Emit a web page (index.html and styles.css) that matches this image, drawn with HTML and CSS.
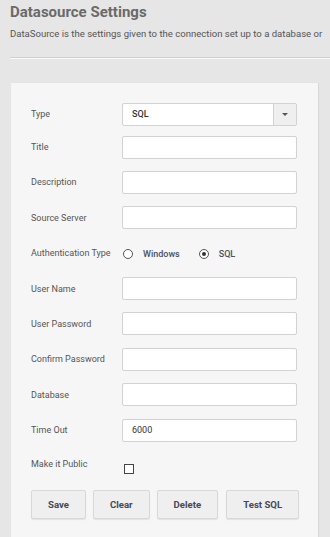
FILE: index.html
```html
<!DOCTYPE html>
<html>
<head>
<meta charset="utf-8">
<link rel="stylesheet" href="styles.css">
</head>
<body>
<div class="page">
  <h1 class="title">Datasource Settings</h1>
  <p class="subtitle">DataSource is the settings given to the connection set up to a database or other source of data used by the reports.</p>
  <hr class="divider">
  <div class="card">
    <div class="row row-first">
      <span class="label">Type</span>
      <div class="select">
        <span class="select-value">SQL</span>
        <span class="select-arrow"><span class="caret"></span></span>
      </div>
    </div>
    <div class="row"><span class="label">Title</span><div class="input"></div></div>
    <div class="row"><span class="label">Description</span><div class="input"></div></div>
    <div class="row"><span class="label">Source Server</span><div class="input"></div></div>
    <div class="row">
      <span class="label">Authentication Type</span>
      <div class="radios">
        <span class="radio"></span><span class="radio-text">Windows</span>
        <span class="radio radio-on"></span><span class="radio-text">SQL</span>
      </div>
    </div>
    <div class="row"><span class="label">User Name</span><div class="input"></div></div>
    <div class="row"><span class="label">User Password</span><div class="input"></div></div>
    <div class="row"><span class="label">Confirm Password</span><div class="input"></div></div>
    <div class="row"><span class="label">Database</span><div class="input"></div></div>
    <div class="row"><span class="label">Time Out</span><div class="input"><span class="input-value">6000</span></div></div>
    <div class="row row-public"><span class="label">Make it Public</span><span class="checkbox"></span></div>
    <div class="buttons">
      <button class="btn">Save</button>
      <button class="btn">Clear</button>
      <button class="btn">Delete</button>
      <button class="btn btn-last">Test SQL</button>
    </div>
  </div>
</div>
</body>
</html>
```

FILE: styles.css
```css
html, body {
  margin: 0;
  padding: 0;
  background: #e6e6e6;
  overflow: hidden;
  font-family: Roboto, "Liberation Sans", sans-serif;
}
.page {
  padding: 0 0 0 10px;
  width: 320px;
  height: 537px;
  overflow: hidden;
}
.title {
  margin: 0;
  padding-top: 3px;
  font-size: 15px;
  font-weight: 700;
  color: #6a6a6a;
  line-height: 18px;
}
.subtitle {
  margin: 7px 0 0;
  width: 314px;
  overflow: hidden;
  font-size: 9.55px;
  line-height: 12px;
  color: #555;
  white-space: nowrap;
}
.divider {
  margin: 17px 0 0;
  border: 0;
  border-top: 1px solid #cfcfcf;
  border-bottom: 1px solid #fafafa;
  height: 0;
  width: 330px;
}
.card {
  margin: 24px 0 0 1px;
  width: 307px;
  height: 480px;
  box-sizing: border-box;
  background: #f6f6f6;
  padding: 19.5px 0 0 20px;
  box-shadow: 1px 0 1px rgba(0,0,0,0.06);
}
.row {
  display: flex;
  align-items: center;
  height: 23px;
  margin-bottom: 12.4px;
}
.row-first { margin-bottom: 10px; }
.label {
  width: 91px;
  flex: none;
  font-size: 9px;
  color: #555;
  white-space: nowrap;
}
.input, .select {
  width: 175px;
  height: 23px;
  box-sizing: border-box;
  background: #fff;
  border: 1px solid #d2d2d2;
  border-radius: 2px;
  display: flex;
  align-items: center;
}
.input-value, .select-value {
  padding-left: 9px;
  font-size: 9px;
  color: #333;
}
.select-value { font-weight: 500; flex: 1; }
.select-arrow {
  width: 23px;
  height: 100%;
  box-sizing: border-box;
  border-left: 1px solid #d2d2d2;
  background: #efefef;
  display: flex;
  align-items: center;
  justify-content: center;
}
.caret {
  width: 0;
  height: 0;
  border-left: 3px solid transparent;
  border-right: 3px solid transparent;
  border-top: 3px solid #555;
}
.radios {
  display: flex;
  align-items: center;
  padding-top: 2px;
}
.radio {
  width: 10px;
  height: 10px;
  box-sizing: border-box;
  border: 1px solid #555;
  border-radius: 50%;
  background: #fff;
  margin-left: 1px;
  position: relative;
}
.radio-on::after {
  content: "";
  position: absolute;
  left: 2px;
  top: 2px;
  width: 4px;
  height: 4px;
  border-radius: 50%;
  background: #333;
}
.radio-text {
  font-size: 9px;
  font-weight: 500;
  color: #4a5060;
  margin-left: 10px;
  margin-right: 18px;
}
.row-public { align-items: flex-start; padding-top: 5px; height: 18px; }
.checkbox {
  width: 10px;
  height: 10px;
  box-sizing: border-box;
  border: 1px solid #444;
  background: #fff;
  margin: 5px 0 0 2px;
}
.buttons {
  display: flex;
  gap: 7px;
  margin-top: 13px;
}
.btn {
  height: 29px;
  padding: 0 16px;
  font-family: Roboto, "Liberation Sans", sans-serif;
  font-size: 9.6px;
  font-weight: 700;
  color: #454a55;
  background: #efefef;
  border: 1px solid #d8d8d8;
  border-radius: 2px;
  box-shadow: 0 1px 1px rgba(0,0,0,0.08);
}
.btn-last { margin-left: 1px; }
```
